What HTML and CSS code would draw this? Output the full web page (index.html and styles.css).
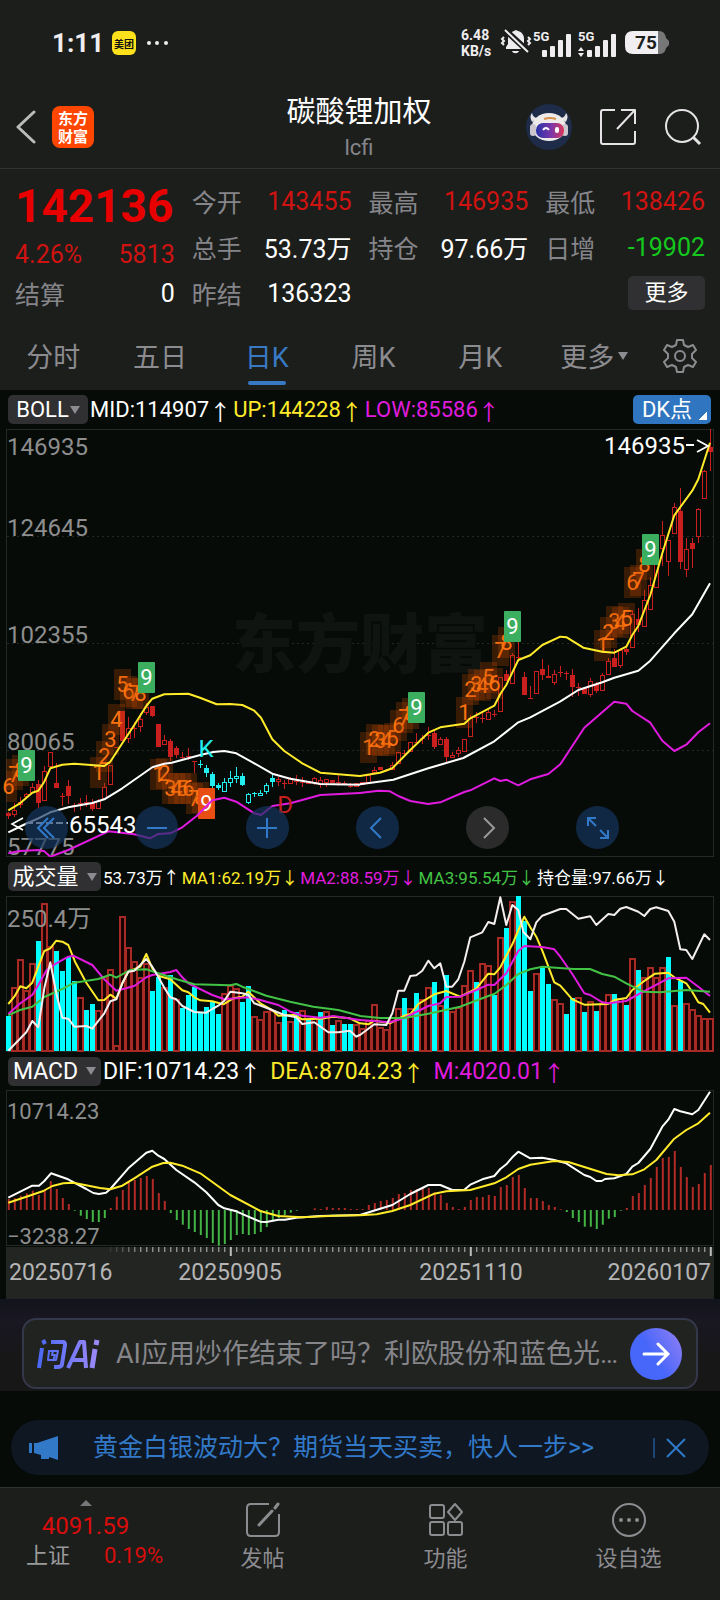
FILE: index.html
```html
<!DOCTYPE html>
<html lang="zh-CN">
<head>
<meta charset="utf-8">
<meta name="viewport" content="width=device-width, initial-scale=1">
<title>碳酸锂加权</title>
<link rel="stylesheet" href="styles.css">
</head>
<body>
<div class="status">
  <span class="clock">1:11</span>
  <span class="app-badge">美团</span>
  <svg class="dots" width="24" height="6" viewBox="0 0 24 6" fill="#efedef"><circle cx="3" cy="3" r="2"/><circle cx="11" cy="3" r="2"/><circle cx="20" cy="3" r="2"/></svg>
  <span class="speed"><span>6.48</span><span>KB/s</span></span>
  <svg width="32" height="28" viewBox="0 0 32 28" fill="#efedef"><path d="M6 20V18l2-3v-5c0-4 3-7 6-8l2-1 2 1c4 1 6 4 6 8v5l2 3v2zM12 22h7c-1 3-6 3-7 0z"/><path d="M4 0l26 24" stroke="#1c1e1c" stroke-width="6"/><path d="M5 1l23 22M4 8l-2 2 2 2-2 2 2 2M28 8l2 2-2 2 2 2-2 2" fill="none" stroke="#efedef" stroke-width="2"/></svg>
  <svg class="sim" width="39" height="32" viewBox="0 -4 39 32" fill="#efedef"><text x="1" y="10" class="sig">5G</text><rect x="10" y="19" width="5" height="7" rx="1"/><rect x="18" y="15" width="5" height="11" rx="1"/><rect x="26" y="9" width="5" height="17" rx="1"/><rect x="34" y="3" width="5" height="23" rx="1"/></svg>
  <svg class="sim sim2" width="39" height="32" viewBox="0 -4 39 32" fill="#efedef"><text x="1" y="10" class="sig">5G</text><path d="M1 20l3-4 3 4zM1 22l3 4 3-4z"/><rect x="10" y="19" width="5" height="7" rx="1"/><rect x="18" y="15" width="5" height="11" rx="1"/><rect x="26" y="9" width="5" height="17" rx="1"/><rect x="34" y="3" width="5" height="23" rx="1"/></svg>
  <svg class="battery" width="44" height="24" viewBox="0 0 44 24"><path d="M8 0h26q6 0 7 7l3 3v4l-3 3q-1 6-7 6H8z" fill="#777"/><path d="M8 0h25v23H8q-8 0-8-8V8q0-8 8-8z" fill="#f1eff1"/><text x="10" y="18" class="bat">75</text></svg>
</div>

<header class="top">
  <div class="side">
    <button class="plain" aria-label="返回"><svg width="20" height="34" viewBox="0 0 20 34" fill="none" stroke="#bbb" stroke-width="3" stroke-linecap="round" stroke-linejoin="round"><path d="M18 2L2 17l16 15"/></svg></button>
    <span class="logo">东方<br>财富</span>
  </div>
  <div class="title"><h1>碳酸锂加权</h1><p>lcfi</p></div>
  <div class="side right">
    <button class="plain" aria-label="智能助手"><svg width="46" height="46" viewBox="0 0 46 46"><circle cx="23" cy="23" r="23" fill="#1e2c49"/><path d="M6 18Q3 12 6 9q1 5 6 5zM40 18q3-6 0-9-1 5-6 5z" fill="#e7e3e5"/><ellipse cx="23" cy="23" rx="17" ry="14" fill="#eeeaea"/><rect x="4" y="20" width="6" height="12" rx="3" fill="#ccc7ce"/><rect x="36" y="20" width="6" height="12" rx="3" fill="#ccc7ce"/><path d="M18 15q6-2 12 0" stroke="#d5904e" stroke-width="2" fill="none"/><rect x="10" y="19" width="28" height="15" rx="7" fill="url(#visor)"/><path d="M17 26q3-4 6 0" stroke="#fff" stroke-width="2" fill="none"/><rect x="29" y="23" width="4" height="6" rx="2" fill="#fff"/><defs><linearGradient id="visor"><stop stop-color="#2933a8"/><stop offset=".55" stop-color="#7b36a8"/><stop offset="1" stop-color="#dd3659"/></linearGradient></defs></svg></button>
    <button class="plain" aria-label="分享"><svg width="36" height="36" viewBox="0 0 36 36" fill="none" stroke="#e5e3e5" stroke-width="2" stroke-linejoin="round"><path d="M15 1H3Q1 1 1 3v30q0 2 2 2h30q2 0 2-2V22M21 1h14v14M34 2L17 20"/></svg></button>
    <button class="plain" aria-label="搜索"><svg width="38" height="38" viewBox="0 0 38 38" fill="none" stroke="#e5e3e5" stroke-width="2"><circle cx="18" cy="18" r="16"/><path d="M29 29l7 7" stroke-width="3"/></svg></button>
  </div>
</header>

<section class="quote">
  <div class="last"><strong>142136</strong><div class="cell up"><span>4.26%</span><span>5813</span></div></div>
  <dl class="cell up"><dt>今开</dt><dd>143455</dd></dl>
  <dl class="cell up"><dt>最高</dt><dd>146935</dd></dl>
  <dl class="cell up"><dt>最低</dt><dd>138426</dd></dl>
  <dl class="cell"><dt>总手</dt><dd>53.73万</dd></dl>
  <dl class="cell"><dt>持仓</dt><dd>97.66万</dd></dl>
  <dl class="cell down"><dt>日增</dt><dd>-19902</dd></dl>
  <dl class="cell"><dt>结算</dt><dd>0</dd></dl>
  <dl class="cell"><dt>昨结</dt><dd>136323</dd></dl>
  <button class="more">更多</button>
</section>

<nav class="tabs">
  <button>分时</button><button>五日</button><button class="on">日K</button><button>周K</button><button>月K</button><button>更多<i class="caret"></i></button>
  <button aria-label="设置"><svg width="34" height="34" viewBox="0 0 34 34" fill="none" stroke="#8c8c90" stroke-width="2" stroke-linejoin="round"><path d="M14 1h6l1 5 4 2 5-2 3 5-4 4v4l4 4-3 5-5-2-4 2-1 5h-6l-1-5-4-2-5 2-3-5 4-4v-4l-4-4 3-5 5 2 4-2z"/><circle cx="17" cy="17" r="5"/></svg></button>
</nav>

<main>
  <div class="legend">
    <button class="chip">BOLL<i class="caret"></i></button>
    <span>MID:114907<b>↑</b></span><span class="y">UP:144228<b>↑</b></span><span class="m">LOW:85586<b>↑</b></span>
    <button class="dk">DK点</button>
  </div>
  <div class="price">
    <svg class="chart" id="price" viewBox="0 429 720 428"></svg>
    <div class="tools">
      <button aria-label="最早"><svg viewBox="0 0 24 24"><path d="M13 2L3 12l10 10M19 2L9 12l10 10"/></svg></button>
      <button aria-label="缩小"><svg viewBox="0 0 24 24"><path d="M2 12h20"/></svg></button>
      <button aria-label="放大"><svg viewBox="0 0 24 24"><path d="M2 12h20M12 2v20"/></svg></button>
      <button aria-label="向左"><svg viewBox="0 0 24 24"><path d="M16 2L6 12l10 10"/></svg></button>
      <button class="off" aria-label="向右"><svg viewBox="0 0 24 24"><path d="M8 2l10 10L8 22"/></svg></button>
      <button aria-label="全屏"><svg viewBox="0 0 24 24"><path d="M2 10V2h8M2 2l8 8M14 22h8v-8M22 22l-8-8"/></svg></button>
    </div>
  </div>
  <div class="legend narrow">
    <button class="chip">成交量<i class="caret"></i></button>
    <span>53.73万<b>↑</b></span><span class="y">MA1:62.19万<b>↓</b></span><span class="m">MA2:88.59万<b>↓</b></span><span class="g">MA3:95.54万<b>↓</b></span><span>持仓量:97.66万<b>↓</b></span>
  </div>
  <svg class="chart" id="volume" viewBox="0 896 720 156"></svg>
  <div class="legend wide">
    <button class="chip">MACD<i class="caret"></i></button>
    <span>DIF:10714.23<b>↑</b></span><span class="y">DEA:8704.23<b>↑</b></span><span class="m">M:4020.01<b>↑</b></span>
  </div>
  <svg class="chart" id="macd" viewBox="0 1090 720 209"></svg>
</main>

<section class="ask">
  <form class="askbox">
    <svg width="64" height="30" viewBox="0 0 64 30" fill="none" stroke="url(#askg)" stroke-width="4" stroke-linejoin="round"><path d="M6 1l2 4M5 9L2 29M14 3h12q2 0 2 3l-3 19q0 3-5 3h-3"/><path d="M12 12h9l-2 9h-8zM16 11l-1 5h3l-2 6" stroke-width="2"/><path d="M31 29L43 3h4l2 26M36 21h12"/><path d="M58 10l-3 19M60 1l-1 5" stroke-width="5"/><defs><linearGradient id="askg" gradientUnits="userSpaceOnUse" x1="0" y1="0" x2="64" y2="0"><stop stop-color="#4968f5"/><stop offset="1" stop-color="#a18bf8"/></linearGradient></defs></svg>
    <input aria-label="问AI" placeholder="AI应用炒作结束了吗？利欧股份和蓝色光…">
    <button type="button" class="go" aria-label="发送"><svg width="28" height="28" viewBox="0 0 28 28" fill="none" stroke="#fff" stroke-width="3" stroke-linecap="round"><path d="M2 14h23M16 4l10 10-10 10"/></svg></button>
  </form>
</section>

<section class="promo">
  <div class="pill">
    <svg width="30" height="24" viewBox="0 0 30 24" fill="#3279c8"><path d="M0 7h3v10H0zM5 7h3L29 0v24l-9-3v2h-8v-4L5 17z"/></svg>
    <a href="#">黄金白银波动大？期货当天买卖，快人一步&gt;&gt;</a>
    <button class="plain close" aria-label="关闭"><svg width="20" height="20" viewBox="0 0 20 20" stroke="#3279c8" stroke-width="2"><path d="M1 1l18 18M19 1L1 19"/></svg></button>
  </div>
</section>

<footer class="bottom">
  <a class="index" href="#"><i class="tri"></i><span class="val">4091.59</span><span class="line"><span class="name">上证</span><span>0.19%</span></span></a>
  <a class="item" href="#"><svg width="36" height="36" viewBox="0 0 36 36" fill="none" stroke="#8c8c90" stroke-width="2"><path d="M24 2H6Q2 2 2 6v24q0 4 4 4h24q4 0 4-4V12"/><path d="M14 23l13-14M30 6l3-4" stroke-width="3" stroke-linecap="round"/></svg>发帖</a>
  <a class="item" href="#"><svg width="36" height="36" viewBox="0 0 36 36" fill="none" stroke="#8c8c90" stroke-width="2"><rect x="2" y="3" width="14" height="13" rx="2"/><rect x="2" y="20" width="14" height="13" rx="2"/><rect x="20" y="20" width="14" height="13" rx="2"/><path d="M27 2l7 8-7 8-7-8z" stroke-linejoin="round"/></svg>功能</a>
  <a class="item" href="#"><svg width="36" height="36" viewBox="0 0 36 36" fill="none" stroke="#8c8c90" stroke-width="2"><circle cx="18" cy="18" r="16"/><g fill="#8c8c90" stroke="none"><circle cx="10" cy="18" r="2"/><circle cx="18" cy="18" r="2"/><circle cx="26" cy="18" r="2"/></g></svg>设自选</a>
</footer>
<script src="charts.js"></script>
</body>
</html>
```
FILE: styles.css
```css
* { box-sizing: border-box; }
body {
  margin: 0;
  background: #060b08;
  color: #fff;
  font-family: Roboto, "Noto Sans CJK SC", sans-serif;
  font-size: 24px;
}
button, input { font: inherit; color: inherit; border: 0; background: none; padding: 0; margin: 0; }
a { color: inherit; text-decoration: none; }
svg { display: block; flex: none; }
h1, p, dl, dd { margin: 0; font-weight: 400; }
.plain { display: block; }
.caret { border: 5px solid transparent; border-top: 8px solid #8c8c90; border-bottom: 0; }

.status { height: 86px; background: #1c1e1c; display: flex; align-items: center; padding: 0 51px 0 52px; color: #efedef; }
.clock { font-size: 26px; font-weight: 700; }
.app-badge { margin-left: 8px; width: 24px; height: 24px; border-radius: 6px; background: #ffe11b; color: #111; font-size: 10px; font-weight: 700; display: grid; place-items: center; }
.dots { margin-left: 10px; }
.speed { margin-left: auto; margin-right: 6px; display: flex; flex-direction: column; font-size: 14px; line-height: 16px; font-weight: 700; width: 33px; }
.sim { align-self: center; }
.sig { font: 700 13px Roboto, sans-serif; }
.sim2 { margin-left: 6px; }
.battery { margin-left: 9px; }
.bat { font: 700 19px Roboto, sans-serif; fill: #1c1e1c; }

.top { height: 83px; background: #1c1e1c; border-bottom: 1px solid #30322f; display: grid; grid-template-columns: 1fr auto 1fr; align-items: center; padding: 0 18px 0 16px; }
.side { display: flex; align-items: center; gap: 16px; }
.side.right { justify-content: flex-end; gap: 28px; }
.logo { width: 42px; height: 42px; border-radius: 8px; background: #ff4600; font: 700 15px/18px "Noto Sans CJK SC", sans-serif; text-align: center; padding-top: 3px; }
.title { text-align: center; }
.title h1 { font-size: 29px; line-height: 42px; }
.title p { font-size: 22px; line-height: 30px; color: #85858a; }

.quote { background: #1c1e1c; display: grid; grid-template-columns: repeat(4, minmax(0, 1fr)); grid-template-rows: repeat(3, 46px); column-gap: 17px; padding: 9px 15px 11px; }
.last { grid-row: span 2; color: #e80000; display: flex; flex-direction: column; }
.last strong { font-family: "Liberation Sans Narrow", Roboto, sans-serif; font-size: 46px; line-height: 57px; }
.last .cell { line-height: 39px; }
.cell { display: flex; justify-content: space-between; align-items: center; white-space: nowrap; font-size: 25px; }
.cell dt { color: #85858a; }
.cell.up { color: #cf1311; }
.cell.down dd { color: #14c81e; }
.more { grid-column: 4; justify-self: end; align-self: center; width: 77px; height: 34px; border-radius: 5px; background: #303032; font-size: 22px; line-height: 34px; }

.tabs { background: #1c1e1c; height: 63px; display: grid; grid-template-columns: repeat(5, 107fr) 122fr 50fr; padding-right: 15px; color: #8c8c90; font-size: 27px; }
.tabs button { display: flex; align-items: center; justify-content: center; padding-bottom: 6px; position: relative; }
.tabs .caret { margin-left: 4px; }
.tabs .on { color: #3879c3; }
.tabs .on::after { content: ""; position: absolute; bottom: 5px; width: 38px; height: 4px; border-radius: 2px; background: #3879c3; }

.legend { height: 39px; display: flex; align-items: center; gap: 2px; padding: 0 8px; white-space: nowrap; font-size: 22px; }
.legend span { display: flex; align-items: center; }
.legend b { font: 400 22px/28px "Noto Sans CJK SC", sans-serif; }
.legend .chip { background: #303032; border-radius: 5px; height: 29px; width: 80px; display: flex; align-items: center; justify-content: center; gap: 1px; line-height: 29px; }
.legend .dk { margin-left: auto; margin-right: 1px; background: linear-gradient(135deg, transparent 50%, #fff 50%) right 4px bottom 4px / 8px 8px no-repeat #2f75c0; border-radius: 5px; width: 78px; height: 29px; padding-right: 10px; line-height: 28px; }
.y { color: #ffeb2a; }
.m { color: #e01bdf; }
.g { color: #43c345; }
.narrow { font-size: 17px; }
.narrow .chip { width: 93px; font-size: 22px; gap: 8px; }
.narrow b { font-size: 17px; }
.wide { height: 38px; font-size: 23px; gap: 9px; }
.wide .chip { width: 93px; margin-right: -7px; gap: 8px; }

.chart { width: 100%; height: auto; }
.price { position: relative; }
.tools { position: absolute; left: 3.5%; right: 14%; bottom: 8px; display: flex; justify-content: space-between; }
.tools button { width: 43px; height: 43px; border-radius: 50%; background: rgba(24, 55, 98, .68); display: grid; place-items: center; }
.tools svg { width: 24px; height: 24px; fill: none; stroke: #3279c8; stroke-width: 2; }
.tools .off { background: #2a2b2a; }
.tools .off svg { stroke: #9a9a9a; }
.lab { font: 24px Roboto, sans-serif; fill: #8e8e8e; }
.lab.small { font-size: 22px; }
.lab.white { fill: #fff; }
.lab.axis { font-size: 23px; fill: #b5b5b5; }
.cjk { font-family: "Noto Sans CJK SC", sans-serif; }
.mark { font: 22px Roboto, sans-serif; text-anchor: middle; }
.water { font: 900 64px "Noto Sans CJK SC", sans-serif; fill: #0f1411; }

.ask { padding: 19px 22px 2px; background: linear-gradient(#12141c, #191722 20px, #171717 60px); }
.askbox { height: 71px; border: 2px solid #35374a; border-radius: 14px; background: #212321; display: flex; align-items: center; padding: 0 14px 0 13px; gap: 15px; }
.askbox input { flex: 1; min-width: 0; font-size: 27px; outline: 0; }
.askbox input::placeholder { color: #85858a; opacity: 1; }
.go { width: 52px; height: 52px; border-radius: 50%; background: linear-gradient(60deg, #4766fa 45%, #9481f5); display: grid; place-items: center; margin-left: -8px; }

.promo { padding: 29px 11px 12px; }
.pill { height: 55px; border-radius: 28px; background: #0e1722; display: flex; align-items: center; padding: 0 23px 0 18px; color: #3279c8; }
.pill a { margin-left: 34px; flex: 1; white-space: nowrap; font-size: 25px; line-height: 34px; }
.close { border-left: 2px solid #1e4674; padding-left: 11px; }

.bottom { height: 113px; border-top: 1px solid #30322f; background: #1c1e1c; display: grid; grid-template-columns: 171fr 183fr 183fr 183fr; color: #8c8c90; font-size: 22px; }
.item { display: flex; flex-direction: column; align-items: center; padding-top: 14px; gap: 5px; line-height: 32px; }
.index { display: flex; flex-direction: column; align-items: center; color: #d90d0b; padding-top: 12px; line-height: 30px; }
.tri { border: 6px solid transparent; border-bottom: 6px solid #77777a; border-top: 0; margin-bottom: 5px; }
.val { font-size: 24px; }
.line { display: flex; justify-content: space-between; align-self: stretch; padding: 0 8px 0 26px; }
.name { color: #9a9a9a; }
```
FILE: charts.js
```js
// Series are stored at three units per pixel; day i sits at x = 25 + 18 * i units.
const NS = 'http://www.w3.org/2000/svg';
const X = i => 8.5 + 6 * i;
function add(svg, tag, attrs, text) {
  const el = document.createElementNS(NS, tag);
  for (const k in attrs) el.setAttribute(k, attrs[k]);
  if (text !== undefined) el.textContent = text;
  svg.appendChild(el);
  return el;
}
// "left|right": the right half starts 1080 units further along.
function line(svg, top, color, data) {
  const pts = data.split('|').flatMap((half, h) => half.trim().split(' ').map(p => {
    const [x, y] = p.split(',').map(Number);
    return ((x + h * 1080) / 3).toFixed(1) + ',' + (y / 3 + top).toFixed(1);
  }));
  add(svg, 'polyline', { points: pts.join(' '), fill: 'none', stroke: color, 'stroke-width': 2, 'stroke-linejoin': 'round' });
}
function frame(svg, y, h) {
  add(svg, 'rect', { x: 6.5, y: y + .5, width: 707, height: h - 1, fill: 'none', stroke: '#252825' });
}
function label(svg, x, y, text, cls = 'lab', extra = {}) {
  return add(svg, 'text', { x, y, class: cls, ...extra }, text);
}

/* ---------- price ---------- */
const price = document.getElementById('price');
frame(price, 429, 428);
for (const y of [536.5, 643.5, 750.5])
  add(price, 'path', { d: `M7 ${y}H713`, stroke: '#252825', 'stroke-dasharray': '2 3' });
label(price, 232, 667, '东方财富', 'water');
[['146935', 455], ['124645', 536], ['102355', 643], ['80065', 750], ['57775', 855]].forEach(([t, y]) => label(price, 7, y, t));

// kind, body top, body bottom, high, low  (f filled, h hollow, d doji)
const candles = `f1180,1187,1175,1197 h1170,1186,1150,1192 h1147,1155,1130,1165 h1123,1130,1118,1134 h1100,1118,1088,1118 f1092,1148,1080,1165 h1054,1142,1038,1142 h997,1042,997,1042 f1090,1105,1030,1105 d1128,1128,1118,1158 f1097,1127,1080,1152 d1155,1155,1148,1175 d1150,1150,1133,1170 d1146,1146,1125,1160 f1150,1168,1137,1172 h1144,1166,1138,1166 h1102,1138,1090,1138 h1036,1096,1036,1096 d980,980,980,980 f874,964,874,964 h925,958,890,970 d925,925,905,955 h897,920,880,937 h862,880,850,885 f859,887,859,890 f912,980,912,980 h961,974,945,974 f962,1010,957,1022 f983,1005,978,1015 d1010,1010,995,1020 d1008,1008,985,1020 d1023,1023,1023,1058 d1033,1033,1020,1044 f1045,1060,1036,1070 f1062,1098,1055,1104 f1095,1103,1090,1110 h1087,1117,1075,1117 h1074,1088,1052,1100 h1067,1078,1042,1090 f1068,1095,1060,1098 h1122,1148,1118,1153 d1120,1120,1115,1130 h1118,1126,1110,1126 h1095,1117,1088,1123 f1075,1087,1060,1100 h1078,1086,1070,1097 d1088,1088,1080,1108 h1075,1093,1070,1093 d1082,1082,1065,1095 d1085,1085,1072,1100 h1082,1087,1082,1087 h1075,1088,1070,1095 h1080,1095,1070,1103 h1078,1090,1078,1100 f1080,1088,1080,1088 d1087,1087,1065,1098 d1088,1088,1084,1092 d1098,1098,1088,1105 h1090,1100,1090,1100 h1085,1095,1085,1095 h1066,1088,1066,1088 h1050,1060,1040,1060 f1042,1050,1042,1050 d1050,1050,1046,1055 h1035,1050,1025,1050 h995,1033,995,1033 d998,998,990,1005 h965,995,965,995 d965,965,940,965 d955,955,945,972 d945,945,922,960 f940,980,933,988 h958,976,950,976 f956,1010,950,1028 h1005,1013,995,1015 h990,1003,980,1012 h956,996,956,996 h893,952,885,952 d890,890,875,908 d895,895,880,910 h877,900,865,900 d883,883,870,890 h770,875,770,875 f763,783,750,783 h706,792,698,792 d710,710,660,722 f772,826,757,826 d835,835,798,835 h752,823,752,823 f747,765,718,780 f768,773,735,775 h763,788,750,795 d757,757,738,770 d760,760,753,780 f765,802,747,830 d800,800,790,828 f805,822,800,822 h783,825,775,832 f793,812,785,818 h766,812,758,812 h723,766,715,766 f713,741,688,741 h690,738,685,745 f687,695,675,705 h583,685,570,685 f597,615,565,635 h541,620,510,620 h495,571,470,571 h430,503,430,503 h346,388,303,437 h361,425,361,467 h262,343,250,343 f272,425,205,447 h388,449,355,470 f370,387,355,445 h268,350,263,368 h154,238,150,238 f80,95,28,152`.split(' ');
const py = v => Math.round(v / 3 + 420);
candles.forEach((c, i) => {
  const [t, b, hi, lo] = c.slice(1).split(',').map(Number).map(py);
  const color = i >= 32 && i <= 44 ? '#22eef0' : '#c9201f', x = X(i);
  if (lo > hi) add(price, 'path', { d: c[0] === 'h' ? `M${x} ${hi}V${t}M${x} ${b}V${lo}` : `M${x} ${hi}V${lo}`, stroke: color });
  if (c[0] === 'd') add(price, 'path', { d: `M${x - 2.5} ${t + .5}h5`, stroke: color });
  else if (c[0] === 'f') add(price, 'rect', { x: x - 2.5, y: t, width: 5, height: Math.max(2, b - t), fill: color });
  else add(price, 'rect', { x: x - 2, y: t + .5, width: 4, height: Math.max(2, b - t - 1), fill: '#060b08', stroke: color });
});

// day index, centre y, digit, optional solid fill
const marks = [[0,1098,6],[1,1062,7],[2,1050,8],[3,1036,9,'#3bae60'],
  [15,1057,1],[16,1007,2],[17,956,3],[18,898,4],[19,793,5],[20,813,6],[21,820,7],[22,820,8],[23,771,9,'#3bae60'],
  [25,1062,1],[26,1060,2],[27,1105,3],[28,1105,4],[29,1105,5],[30,1105,6],[31,1135,7],[32,1130,8],[33,1150,9,'#e84e12'],
  [60,980,1],[61,957,2],[62,960,3],[63,960,4],[64,955,5],[65,915,6],[66,890,7],[67,880,8],[68,862,9,'#3bae60'],
  [76,875,1],[77,806,2],[78,792,3],[79,795,4],[80,770,5],[81,790,6],[82,690,7],[83,665,8],[84,617,9,'#3bae60'],
  [99,674,1],[100,637,2],[101,602,3],[102,607,4],[103,595,5],[104,485,6],[105,480,7],[106,432,8],[107,386,9,'#3bae60']];
marks.forEach(([i, y, n, fill]) => {
  const cy = py(y), x = Math.max(X(i) - 8.5, 6);
  add(price, 'rect', { x, y: cy - 15, width: X(i) + 8.5 - x, height: 31, rx: fill ? 1 : 0, fill: fill || 'rgba(190,72,0,.27)' });
  label(price, X(i), cy + 8, n, 'mark', { fill: fill ? '#fff' : '#ff7310' });
});
line(price, 420, '#ffeb2a', '25,1171 60,1150 97,1118 115,1112 133,1085 151,1045 187,1034 223,1031 313,1038 331,1025 360,980 403,915 439,858 457,836 493,823 565,821 600,833 650,853 690,852 727,855 763,872 783,893 817,958 853,993 907,1030 961,1058 1079,1068|0,1068 60,1058 97,1045 151,990 205,938 241,922 313,911 331,895 403,857 421,822 439,795 475,720 511,706 547,675 601,650 620,652 670,683 727,695 763,698 799,680 817,645 835,618 871,525 907,400 943,286 997,212 1015,178 1050,68');
line(price, 420, '#fff', '25,1237 70,1215 115,1195 151,1177 205,1162 277,1149 313,1138 367,1105 457,1042 493,1031 515,1028 601,1005 640,996 673,993 709,1000 763,1030 817,1061 871,1076 961,1092 1079,1094|0,1093 100,1079 205,1045 241,1034 310,1014 403,964 475,907 511,892 600,845 655,810 727,787 763,773 835,752 871,722 943,640 997,583 1050,490');
line(price, 420, '#e01bdf', '25,1300 60,1293 115,1290 133,1294 151,1310 205,1290 325,1234 403,1243 450,1255 475,1242 511,1240 547,1222 590,1188 637,1141 673,1133 709,1145 763,1180 783,1185 817,1158 871,1150 961,1125 1079,1119|0,1119 55,1112 90,1114 115,1128 151,1143 205,1152 241,1147 313,1116 331,1111 403,1075 421,1083 439,1079 475,1096 511,1078 565,1062 601,1033 673,923 763,845 799,851 817,873 871,908 907,962 943,993 979,974 1015,937 1050,910');
label(price, 206, 757, 'K', 'lab', { style: 'fill:#22eef0;text-anchor:middle' });
label(price, 285, 813, 'D', 'lab', { style: 'fill:#c9201f;text-anchor:middle' });
label(price, 69, 833, '65543', 'lab white');
add(price, 'path', { d: 'M23 818L12 824L23 830', fill: 'none', stroke: '#fff', 'stroke-width': 1.6 });
add(price, 'path', { d: 'M26 823H68', stroke: '#fff', 'stroke-width': 2, 'stroke-dasharray': '7 3' });
label(price, 604, 454, '146935', 'lab white');
add(price, 'path', { d: 'M686 445h8M697 440l11 6-11 6', fill: 'none', stroke: '#fff', 'stroke-width': 1.8 });

/* ---------- volume ---------- */
const volume = document.getElementById('volume');
frame(volume, 896, 156);
const bars = 'C468 R380 R298 R390 R308 C242 R128 R257 C273 C332 C290 C363 R412 C450 C432 R450 R347 R328 R554 R168 R260 R302 R350 R310 C392 C350 R380 C346 R418 C443 C405 C380 C455 C441 C424 C462 R398 R375 R385 C427 C377 R468 R477 R453 R450 R487 C451 R482 C455 R450 C480 R475 C457 R453 C494 R480 C492 C492 R493 R505 R480 R433 R500 R508 R470 R443 C413 R443 C400 R418 R380 C366 R436 C346 R453 R440 R374 R330 C366 R310 R315 C404 R230 C204 R122 C109 C183 C393 R338 C320 C372 R416 R428 C462 C415 R410 C457 R424 C453 R428 R403 C402 R415 C436 R295 C331 R350 R322 R350 R322 C290 R436 C362 R430 R447 R464 R474 R474'.split(' ');
bars.forEach((b, i) => {
  const y = Math.round(+b.slice(1) / 3 + 860), h = 1051 - y;
  if (b[0] === 'C') add(volume, 'rect', { x: X(i) - 2.5, y, width: 5, height: h, fill: '#00fdff' });
  else add(volume, 'rect', { x: X(i) - 2.5, y: y + 1, width: 5, height: h - 1, fill: '#190302', stroke: '#a82a25', 'stroke-width': 2 });
});
const volLabel = label(volume, 7, 927, '250.4');
add(volLabel, 'tspan', { class: 'cjk' }, '万');
line(volume, 860, '#ffeb2a', '25,432 43,410 61,379 79,385 97,368 115,320 133,273 151,265 169,242 187,245 205,255 225,305 259,368 295,421 313,420 331,404 349,416 367,370 385,335 421,320 439,282 457,325 475,347 511,358 547,391 565,397 583,412 601,421 637,424 670,433 700,415 727,410 745,395 781,430 817,450 835,467 880,465 907,478 961,476 1000,470 1050,475 1079,490|0,490 25,493 43,482 90,490 133,467 151,462 175,432 223,403 259,393 300,410 331,395 349,386 385,341 403,343 421,322 457,253 493,170 511,202 529,230 547,272 583,367 601,377 637,418 673,434 745,432 763,420 799,414 817,390 850,365 885,341 925,338 943,352 979,370 997,396 1015,427 1030,432 1050,458');
line(volume, 860, '#e01bdf', '25,462 61,430 97,405 115,375 140,330 169,310 205,290 220,287 277,315 313,358 349,392 403,378 439,352 457,345 511,336 529,330 547,352 565,370 637,405 673,418 745,412 781,420 835,435 871,455 907,467 961,473 1000,468 1079,480|0,480 90,487 133,474 151,465 205,438 241,430 259,411 300,410 349,390 385,374 403,375 421,357 439,340 475,273 493,258 547,261 583,268 601,290 637,342 673,400 691,405 727,427 745,430 799,423 850,395 925,355 979,353 1015,380 1050,408');
line(volume, 860, '#43c345', '25,466 60,450 97,440 133,411 187,387 223,368 295,357 331,344 349,353 390,330 439,328 475,340 530,358 583,373 690,376 709,372 727,380 799,407 870,425 940,440 1015,450 1079,467|0,468 60,474 133,474 205,461 300,440 385,408 403,402 439,375 475,342 511,328 547,320 640,327 690,327 727,342 763,350 799,370 850,395 900,397 979,390 1050,395');
line(volume, 860, '#f4eeee', '25,572 79,517 97,483 115,502 133,385 151,307 169,400 187,473 205,476 223,500 259,498 277,506 313,460 331,424 349,418 367,370 385,335 403,332 421,315 439,297 457,320 475,350 493,383 511,412 529,418 547,438 583,456 619,458 637,447 655,437 673,422 691,395 727,400 745,405 763,430 799,443 853,465 889,472 907,492 943,487 985,517 1015,517 1050,512 1069,530 1079,525|0,525 43,493 79,495 97,460 115,392 133,392 151,348 169,346 187,332 205,302 223,325 241,310 259,380 277,380 295,358 313,305 331,232 367,217 385,186 403,192 421,112 439,195 457,135 475,150 490,215 511,238 529,187 547,167 601,147 619,147 655,176 691,169 709,195 745,162 763,165 781,146 799,141 835,155 853,168 871,147 889,142 925,153 943,185 961,268 979,270 997,297 1033,223 1050,240');

/* ---------- MACD ---------- */
const macd = document.getElementById('macd');
frame(macd, 1090, 156);
const hist = [447,445,437,430,422,435,420,393,417,444,462,482,497,507,516,516,504,474,440,420,397,390,384,378,387,429,453,489,510,524,537,546,555,564,579,587,582,570,555,552,555,552,546,531,513,504,495,488,482,480,480,475,477,471,474,474,474,477,477,477,465,459,453,450,444,432,429,420,417,412,414,427,434,459,471,477,471,450,441,441,435,438,411,405,381,375,414,444,444,453,465,471,478,486,504,516,530,530,537,524,506,501,482,474,438,429,405,384,351,324,321,303,351,381,411,402,369,345];
hist.forEach((v, i) => {
  if (v !== 480) add(macd, 'path', { d: `M${X(i) + .3} 1210V${(v / 3 + 1050).toFixed(1)}`, stroke: v < 480 ? '#b22a26' : '#43b545', 'stroke-width': 2 });
});
line(macd, 1050, '#fff', '25,443 97,407 117,407 133,393 153,370 200,386 259,417 280,429 297,432 318,428 331,417 385,355 439,308 457,302 475,317 493,327 529,360 583,397 619,427 655,465 673,475 709,484 745,500 781,515 799,516 835,509 855,509 889,503 960,498 1079,495|0,495 97,465 151,432 205,405 241,405 277,420 313,419 331,404 367,388 403,378 421,357 439,343 457,322 475,305 511,325 547,323 583,330 619,340 673,375 691,381 709,393 725,393 735,387 763,385 799,372 817,350 835,339 871,297 907,230 925,209 943,177 961,184 997,193 1015,180 1050,125');
line(macd, 1050, '#ffeb2a', '25,458 79,440 130,423 157,408 190,400 220,398 300,414 331,418 367,407 403,385 457,350 490,339 511,338 547,347 601,370 691,435 781,483 835,498 907,502 1000,497 1079,496|0,496 50,493 97,483 151,465 223,431 259,424 331,420 403,400 439,382 475,357 511,344 583,333 625,336 740,372 775,376 817,373 853,358 889,330 943,266 979,240 1015,220 1050,188');
label(macd, 7, 1119, '10714.23', 'lab small');
label(macd, 7, 1244, '−3238.27', 'lab small');
add(macd, 'rect', { x: 6, y: 1247, width: 708, height: 52, fill: '#232523' });
for (let i = 17; i <= 117; i++) {
  const major = [37, 77, 117].includes(i);
  add(macd, 'path', { d: `M${X(i) + .3} 1247v${major ? 9 : 5}`, stroke: '#bcbcbc', 'stroke-width': major ? 2 : 1, opacity: Math.min(1, (i - 16) / 6) });
}
label(macd, 9, 1280, '20250716', 'lab axis');
label(macd, 230, 1280, '20250905', 'lab axis', { 'text-anchor': 'middle' });
label(macd, 471, 1280, '20251110', 'lab axis', { 'text-anchor': 'middle' });
label(macd, 711, 1280, '20260107', 'lab axis', { 'text-anchor': 'end' });
```
